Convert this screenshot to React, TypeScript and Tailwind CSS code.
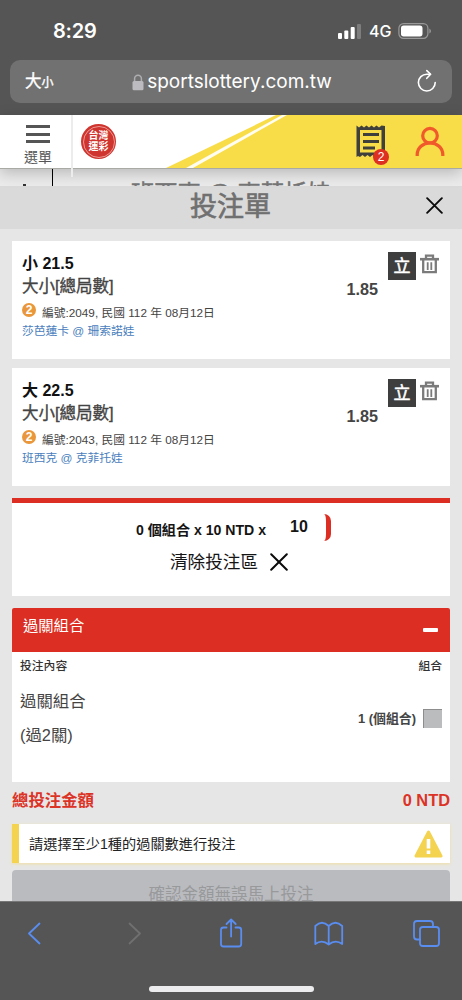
import { useState } from 'react';

interface Bet {
  id: string;
  pick: string;
  market: string;
  match: string;
  odds: string;
}

const BETS: Bet[] = [
  { id: '2049', pick: '小 21.5', market: '大小[總局數]', match: '莎芭蓮卡 @ 珊索諾娃', odds: '1.85' },
  { id: '2043', pick: '大 22.5', market: '大小[總局數]', match: '班西克 @ 克菲托娃', odds: '1.85' },
];

function BrowserTop() {
  return (
    <div className="h-[115px] shrink-0 bg-[#555555] px-[10px] font-['Inter','Noto_Sans_CJK_TC',sans-serif] text-white">
      <div className="flex h-[60px] items-center justify-between pt-[1px] pr-[20px] pl-[43px]">
        <span className="text-[20px] leading-[24px] font-semibold tracking-[-0.2px]">8:29</span>
        <div className="flex items-center">
          <svg className="h-[16px] w-[24px]" viewBox="0 0 24 16" fill="#fff">
            <rect x="0" y="10" width="4" height="6" rx="1" />
            <rect x="6.3" y="7.5" width="4" height="8.5" rx="1" />
            <rect x="12.7" y="4" width="4" height="12" rx="1" />
            <rect x="19" y="1" width="4" height="15" rx="1" fill="#7d7d7d" />
          </svg>
          <span className="ml-[7px] w-[24px] text-[16px] leading-[20px] font-medium">4G</span>
          <svg className="ml-[5px] h-[16px] w-[34px]" viewBox="0 0 34 16" fill="none">
            <rect x="0.9" y="0.7" width="29" height="14.6" rx="4.6" stroke="#999" strokeWidth="1.2" />
            <rect x="3" y="2.6" width="21.5" height="10.8" rx="2.6" fill="#fff" />
            <path d="M31.4 5.5q1.6 1 1.6 2.5t-1.6 2.5z" fill="#999" />
          </svg>
        </div>
      </div>
      <div className="flex h-[43px] items-center justify-between rounded-[10px] bg-[#717171] pr-[14px] pl-[15px]">
        <span className="w-[23px] text-[16.5px] leading-[22px] whitespace-nowrap [-webkit-text-stroke:0.4px_#fff]">
          大<span className="text-[12px]">小</span>
        </span>
        <div className="flex items-center pt-[1px]">
          <svg className="mr-[3px] h-[17px] w-[12px]" viewBox="0 0 12 17">
            <path d="M2.6 8V4.6a3.4 3.4 0 0 1 6.8 0V8" fill="none" stroke="#aeaeb2" strokeWidth="1.5" />
            <rect x="0.5" y="7" width="11" height="9.2" rx="1.5" fill="#bcbcc0" />
          </svg>
          <span className="text-[19px] leading-[24px]">sportslottery.com.tw</span>
        </div>
        <svg className="mb-[2px] h-[24px] w-[22px]" viewBox="0 0 22 24" fill="none" stroke="#fff" strokeWidth="1.6" strokeLinecap="round" strokeLinejoin="round">
          <path d="M19.2 13.6a8.4 8.4 0 1 1-8.4-8.4h3.6" />
          <path d="M10.8 1.6l3.8 3.7-3.8 4" />
        </svg>
      </div>
    </div>
  );
}

function SiteHeader() {
  return (
    <header className="relative z-10 flex h-[54px] shrink-0 border-b border-[#aaaaa4] bg-white shadow-[0_4px_14px_rgba(0,0,0,0.22)]">
      <svg className="absolute top-0 right-0 h-[53px] w-[296px]" viewBox="166 0 296 53">
        <path d="M166 53L276 0H462V53Z" fill="#f8dc48" />
        <path d="M186 53L282 0H287L193 53Z" fill="#fffdf0" />
      </svg>
      <div className="flex w-[74px] flex-col items-center pt-[10px] pl-[2px]">
        <div className="flex w-[24px] flex-col gap-[4.7px]">
          <div className="h-[3px] bg-[#555]"></div>
          <div className="h-[3px] bg-[#555]"></div>
          <div className="h-[3px] bg-[#555]"></div>
        </div>
        <span className="mt-[5px] text-[14px] leading-[18px] text-[#555]">選單</span>
      </div>
      <div className="absolute top-0 left-[71px] h-[62px] w-[2px] bg-[#ececec]"></div>
      <div className="relative mt-[9px] ml-[7px] flex h-[35px] w-[35px] items-center justify-center rounded-full bg-[#d0342e] text-center">
        <div className="absolute inset-[1.5px] rounded-full border border-[#ec9a94]"></div>
        <span className="w-[22px] text-[10px] leading-[10.5px] font-bold text-white">台灣運彩</span>
      </div>
      <div className="relative ml-auto flex pr-[17px]">
        <svg className="mt-[10px] h-[33px] w-[30px]" viewBox="0 0 30 33">
          <path d="M0.5 0.5L3 2.5L5.5 0.5L8 2.5L10.5 0.5L13 2.5L15.5 0.5L18 2.5L20.5 0.5L23 2.5L25.5 0.5L29 1V32L26.5 30L24 32L21.5 30L19 32L16.5 30L14 32L11.5 30L9 32L6.5 30L4 32L2 31L0.5 32Z" fill="#3f3f3d" />
          <path d="M4 5H25.5V27.5H4Z" fill="#f8dc48" />
          <path d="M7 9.5H23M7 16.5H23M7 23H19" stroke="#3f3f3d" strokeWidth="3.2" />
        </svg>
        <span className="absolute top-[34px] left-[17px] flex h-[16px] w-[16px] items-center justify-center rounded-full bg-[#dd3023] text-[12px] leading-none text-white">
          2
        </span>
        <svg className="mt-[11px] ml-[29px] h-[31px] w-[30px]" viewBox="0 0 30 31" fill="none" stroke="#f0592a" strokeWidth="3.2">
          <circle cx="15" cy="9.7" r="7.3" />
          <path d="M2.2 30v-1.5A12.7 11.6 0 0 1 27.8 28.5V30" />
        </svg>
      </div>
    </header>
  );
}

function CloseIcon({ className }: { className: string }) {
  return (
    <svg className={className} viewBox="0 0 18 18" fill="none" stroke="#0b0b0b" strokeWidth="2" strokeLinecap="round">
      <path d="M1.2 1.2L16.8 16.8M16.8 1.2L1.2 16.8" />
    </svg>
  );
}

function BetCard({ bet }: { bet: Bet }) {
  return (
    <div className="flex h-[118px] bg-white pt-[11px] pl-[10px]">
      <div className="flex-1">
        <p className="text-[16px] leading-[23px] font-bold text-[#111]">{bet.pick}</p>
        <p className="text-[16.5px] leading-[23px] text-[#444] [-webkit-text-stroke:0.35px_#444]">{bet.market}</p>
        <div className="mt-[3px] flex h-[20px]">
          <span className="mt-[2px] mr-[6px] flex h-[14px] w-[14px] items-center justify-center rounded-full bg-[#e9973a] text-[12px] leading-none font-bold text-white">
            2
          </span>
          <span className="pt-[3px] text-[11.75px] leading-[18px] text-[#444]">編號:{bet.id}, 民國 112 年 08月12日</span>
        </div>
        <p className="text-[11.75px] leading-[19px] text-[#4a80bd]">{bet.match}</p>
      </div>
      <span className="mt-[28px] mr-[10px] text-[16.2px] leading-[18px] font-bold text-[#444]">{bet.odds}</span>
      <span className="flex h-[28px] w-[28px] items-center justify-center bg-[#3e3e3e] text-[17px] leading-none text-white [-webkit-text-stroke:0.5px_#fff]">
        立
      </span>
      <svg className="mt-[2px] mr-[11px] ml-[4px] h-[20px] w-[19px]" viewBox="0 0 19 20" fill="none" stroke="#7b7b7b" strokeWidth="2.3">
        <path d="M0 5.2H19" strokeWidth="2.6" />
        <path d="M6 4.5V1.6H13V4.5" />
        <path d="M3.2 5V18.2H15.8V5" />
        <path d="M7.7 8.2V16M11.3 8.2V16" strokeWidth="1.8" />
      </svg>
    </div>
  );
}

function BrowserBottom() {
  return (
    <div className="flex h-[99px] shrink-0 flex-col border-t border-[#777] bg-[#555555]">
      <svg className="h-[65px] w-[462px]" viewBox="0 902 462 65" fill="none" stroke="#5a8df0" strokeWidth="1.8" strokeLinecap="round" strokeLinejoin="round">
        <path d="M39.5 923.5L29 933.5L39.5 943.5" />
        <path d="M129.5 923.5L140 933.5L129.5 943.5" stroke="#707070" />
        <path d="M226.5 927.5H223.5Q221 927.5 221 930V944Q221 946.5 223.5 946.5H238.7Q241.2 946.5 241.2 944V930Q241.2 927.5 238.7 927.5H235.5M231.1 936.5V920M226.5 924L231.1 919.5L235.7 924" />
        <path d="M328.7 926Q322 919.5 315.3 926V944Q322 939 328.7 944.5Q335.4 939 342.2 944V926Q335.4 919.5 328.7 926V944.5" />
        <path d="M420 939.5H417Q414 939.5 414 936.5V924Q414 921 417 921H430Q433 921 433 924V926.5" />
        <rect x="420" y="927" width="19" height="19" rx="2.8" />
      </svg>
      <div className="mt-[19px] h-[6px] w-[165px] self-center rounded-full bg-[#ececee]"></div>
    </div>
  );
}

export default function App() {
  const [checked, setChecked] = useState(false);

  return (
    <div className="flex h-[1000px] w-[462px] flex-col overflow-hidden bg-[#e6e6e6] font-['Liberation_Sans','Noto_Sans_CJK_TC',sans-serif]">
      <BrowserTop />
      <SiteHeader />

      {/* Match page behind the slip */}
      <div className="flex h-[17px] shrink-0 overflow-hidden bg-[#ebebeb]">
        <div className="flex w-[53px] justify-end border-r border-black pt-[15px] pr-[26px]">
          <div className="h-[3px] w-[3px] bg-[#333]"></div>
        </div>
        <span className="pt-[10px] pl-[78px] text-[23.3px] leading-[30px] whitespace-nowrap text-[#777] [-webkit-text-stroke:0.5px_#777]">
          班西克 @ 克菲托娃
        </span>
      </div>

      <div className="flex h-[43px] shrink-0 items-center justify-between bg-[#dadada] pr-[19px] pl-[36px]">
        <span className="flex-1 pr-[1px] pb-[1px] text-center text-[27px] leading-[38px] text-[#707070] [-webkit-text-stroke:0.7px_#707070]">
          投注單
        </span>
        <CloseIcon className="mb-[5px] h-[17px] w-[17px]" />
      </div>

      <main className="flex min-h-0 flex-1 flex-col overflow-hidden px-[12px] pt-[12px]">
        <div className="flex shrink-0 flex-col gap-[9px]">
          {BETS.map((bet) => (
            <BetCard key={bet.id} bet={bet} />
          ))}
        </div>

        {/* Stake */}
        <div className="mt-[12px] h-[98px] shrink-0 border-t-[5px] border-[#dc2e22] bg-white pt-[11px]">
          <div className="flex h-[27px] pl-[124px] text-[#151515]">
            <span className="pt-[6px] text-[14.1px] leading-[20px] font-bold whitespace-nowrap">0 個組合 x 10 NTD x</span>
            <span className="ml-[5px] w-[60px] rounded-[7px] border-r-[5px] border-[#dc2e22] pt-[3px] pl-[19px] text-[16px] leading-[19px] font-bold">
              10
            </span>
          </div>
          <button className="mt-[7px] ml-[158px] flex items-center text-[17.6px] leading-[28px] text-[#151515]">
            清除投注區
            <CloseIcon className="mb-[1px] ml-[12px] h-[18px] w-[18px]" />
          </button>
        </div>

        {/* Parlay combinations */}
        <div className="mt-[12px] h-[174px] shrink-0 overflow-hidden rounded-t-[2px] bg-white">
          <div className="flex h-[44px] justify-between bg-[#dc2e22] pr-[12px] pl-[11px] text-white">
            <span className="pt-[6px] text-[15.3px] leading-[24px]">過關組合</span>
            <div className="mt-[20px] h-[4px] w-[15px] rounded-[1px] bg-white"></div>
          </div>
          <div className="flex justify-between pt-[4px] pr-[8px] pl-[8px] text-[11.8px] leading-[20px] font-medium text-[#333]">
            <span>投注內容</span>
            <span>組合</span>
          </div>
          <div className="flex justify-between pr-[8px] pl-[8px]">
            <div className="pt-[8px] text-[16.4px] leading-[34px] text-[#444]">
              <p>過關組合</p>
              <p>(過2關)</p>
            </div>
            <div className="mt-[33px] flex h-[19px] items-center">
              <span className="text-[12.9px] leading-[20px] font-bold text-[#444]">1 (個組合)</span>
              <button
                onClick={() => setChecked(!checked)}
                className={`ml-[7px] h-[19px] w-[19px] border-t border-l border-[#8d8d8d] ${checked ? 'bg-[#dc2e22]' : 'bg-[#bbbcbe]'}`}
              ></button>
            </div>
          </div>
        </div>

        <div className="flex h-[42px] shrink-0 justify-between pt-[6px] text-[16.4px] leading-[24px] font-bold text-[#dc3327]">
          <span>總投注金額</span>
          <span>0 NTD</span>
        </div>

        <div className="flex h-[39px] shrink-0 items-center justify-between border-l-[7px] border-[#f4d351] bg-white pr-[7px] pl-[10px] shadow-[0_1px_3px_#f0dfa0]">
          <span className="text-[14.2px] leading-[20px] text-[#222]">請選擇至少1種的過關數進行投注</span>
          <svg className="h-[28px] w-[29px]" viewBox="0 0 29 28">
            <path d="M14.5 2L27 26H2Z" fill="#f4d351" stroke="#f4d351" strokeWidth="3" strokeLinejoin="round" />
            <path d="M14.5 9V18.5M14.5 20.5V24" stroke="#fff" strokeWidth="3.6" />
          </svg>
        </div>

        <button className="mt-[7px] h-[48px] shrink-0 rounded-[4px] bg-[#babbbf] text-[16.5px] leading-[24px] text-[#98999b]">
          確認金額無誤馬上投注
        </button>
      </main>

      <BrowserBottom />
    </div>
  );
}
